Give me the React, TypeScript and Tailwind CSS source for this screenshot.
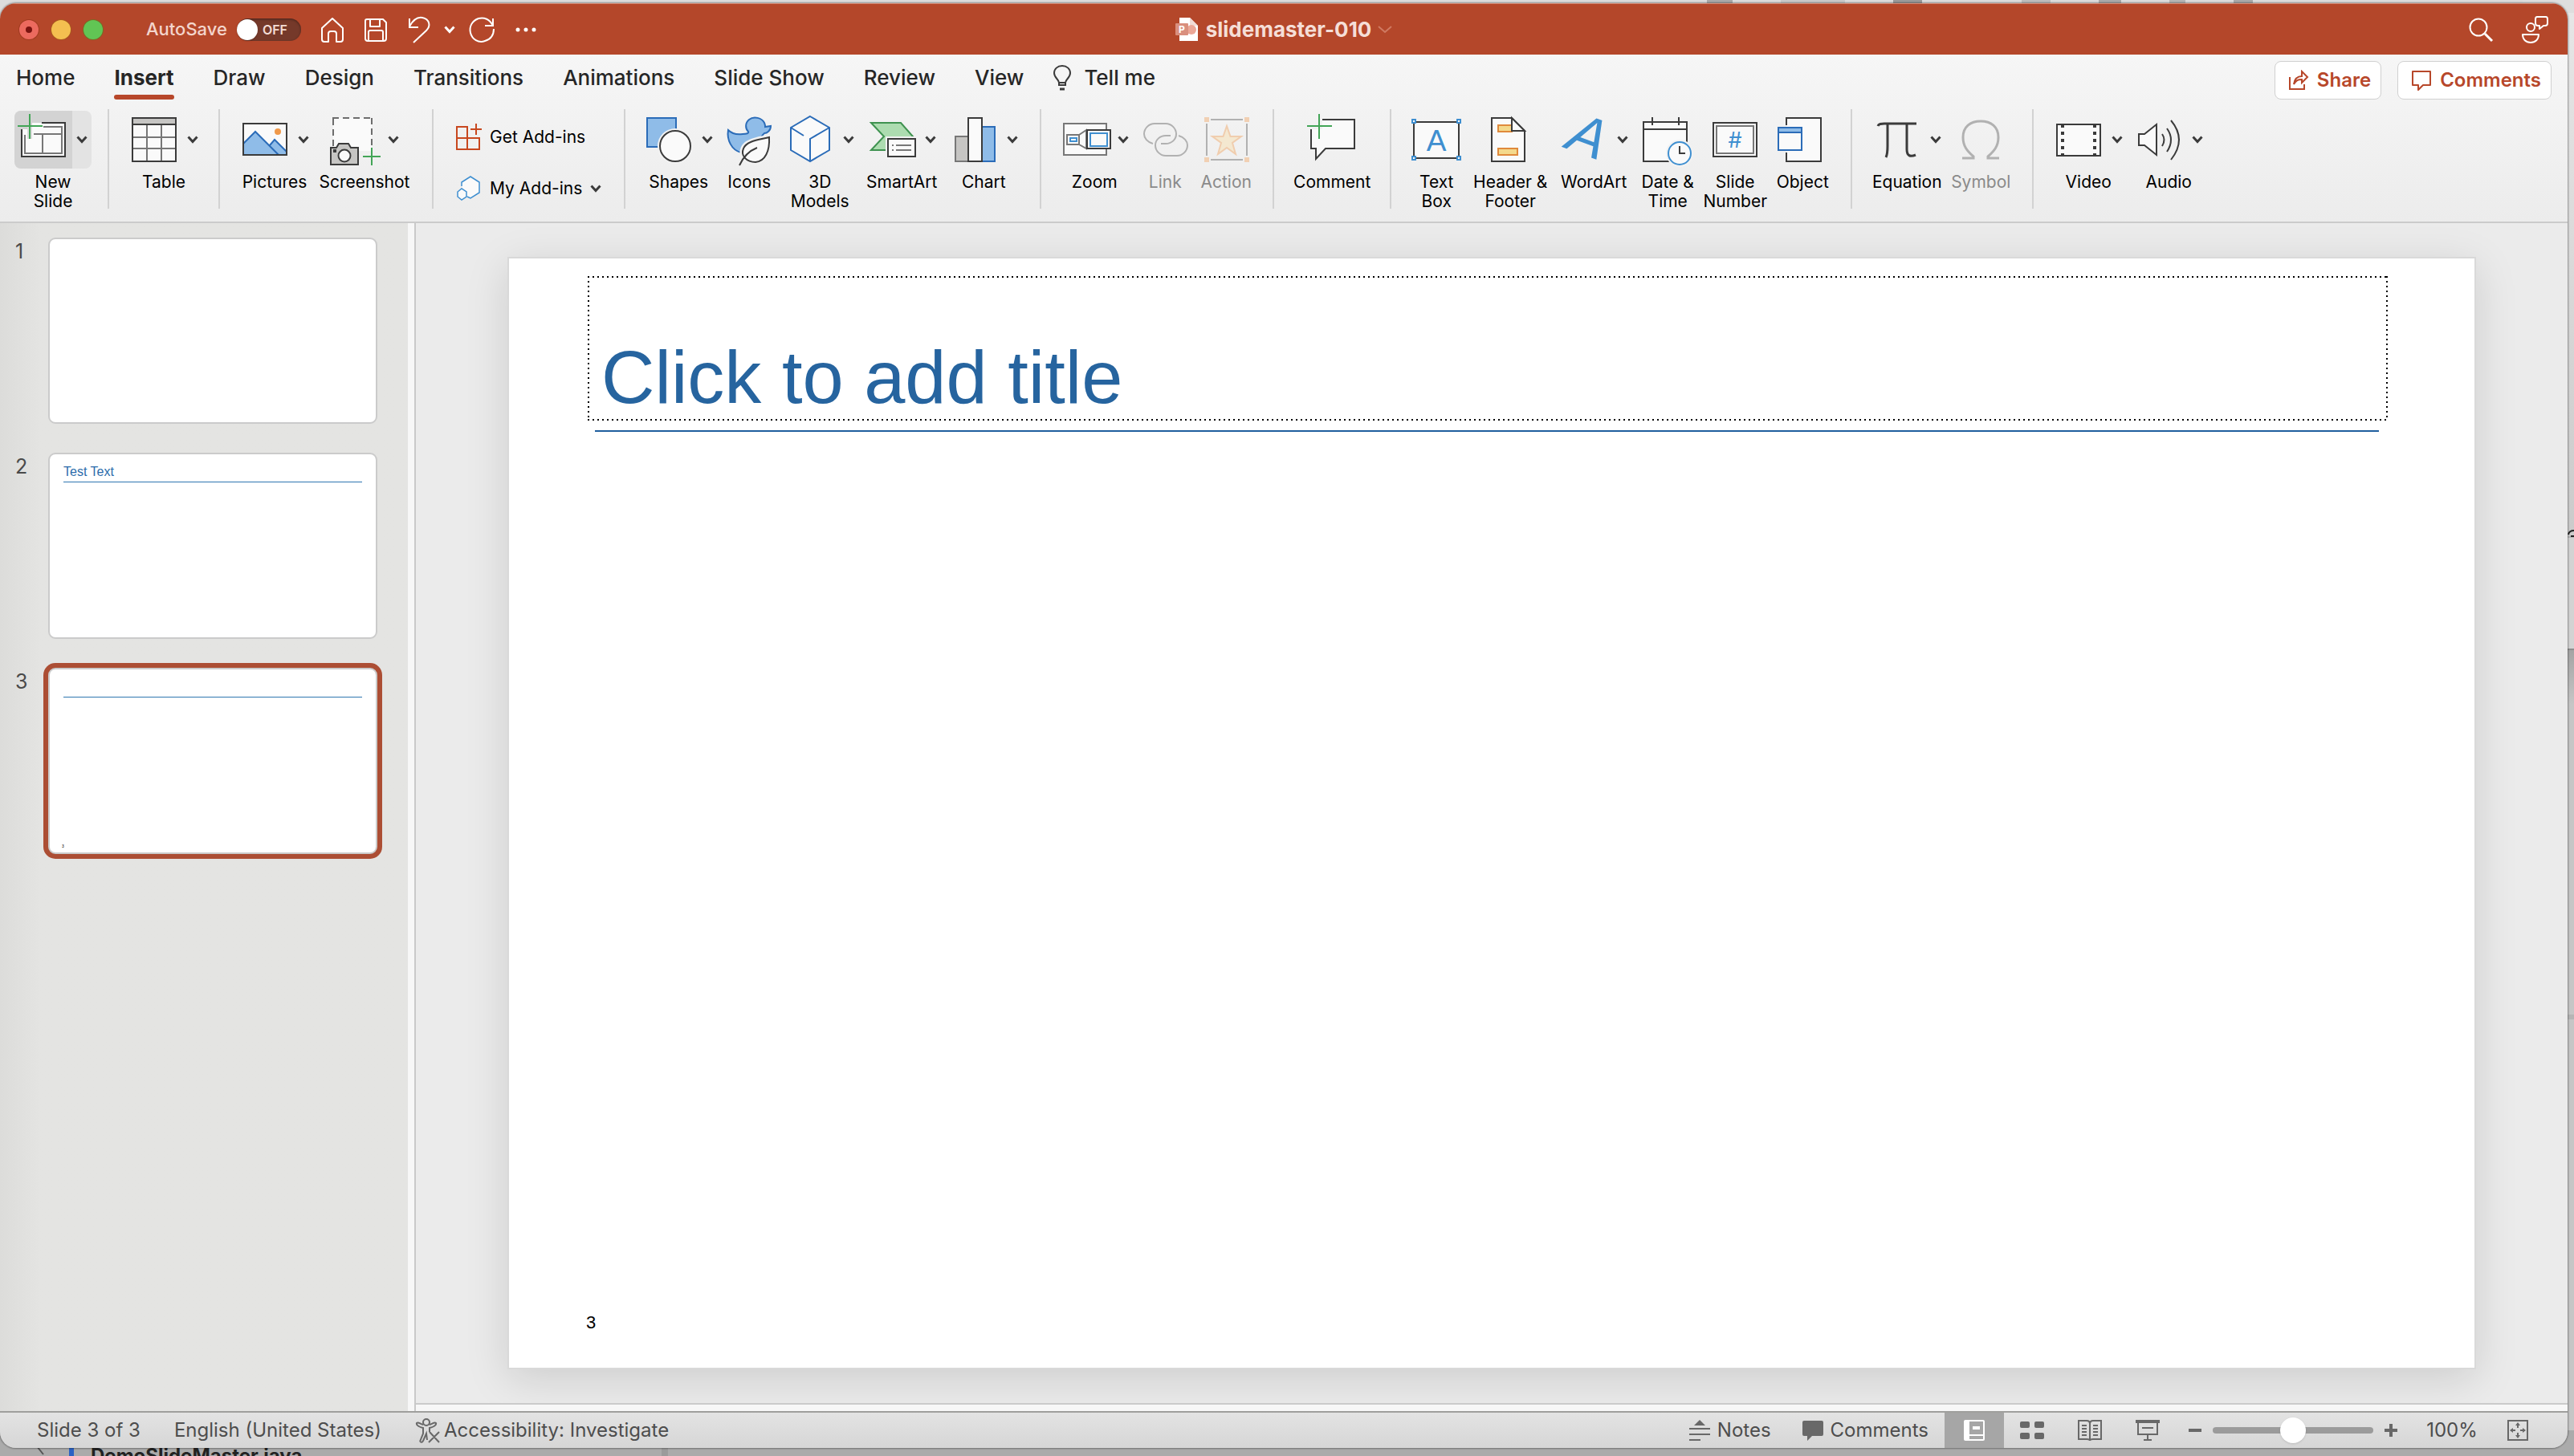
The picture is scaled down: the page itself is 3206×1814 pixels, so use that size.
import React from "react";

const DARK = "#3b3b3b";
const BLUE = "#2b6cb8";
const SKY = "#3f8fd0";
const PALE = "#fafafa";

function Svg({ children, w = 72, h = 72 }: { children: React.ReactNode; w?: number; h?: number }) {
  return (
    <svg width={w} height={h} viewBox={`0 0 ${w} ${h}`} fill="none" strokeWidth={2} className="shrink-0 overflow-visible" aria-hidden="true">
      {children}
    </svg>
  );
}

function Chevron({ color = DARK }: { color?: string }) {
  return (
    <svg width={14} height={10} viewBox="0 0 14 10" fill="none" stroke={color} strokeWidth={3} className="shrink-0" aria-hidden="true">
      <path d="M1.5 1.5 7 7.5 12.5 1.5" />
    </svg>
  );
}

/* ---------- ribbon icons ---------- */

const NewSlideIcon = () => (
  <Svg>
    <path d="M34 15H63V57H9V23H22V15Z" fill={PALE} />
    <path d="M36 20H59V53H13V30" stroke="#777" />
    <path d="M24 29H59M35 29V53" stroke="#777" />
    <path d="M34 15H63V57H9V23" stroke={DARK} />
    <path d="M19 19V35" stroke="#dcdcdc" strokeWidth={6} />
    <path d="M4 19H35M19 4V35" stroke="#43a557" />
  </Svg>
);
const TableIcon = () => (
  <Svg>
    <path d="M9 9H63V63H9Z" fill={PALE} />
    <path d="M9 9H63V17H9Z" fill="#c6c5c3" />
    <path d="M27 17V63M45 17V63M9 33H63M9 47H63" stroke="#777" />
    <path d="M9 9H63V63H9ZM9 17H63" stroke={DARK} />
  </Svg>
);
const PicturesIcon = () => (
  <Svg>
    <path d="M9 16H63V55H9Z" fill={PALE} />
    <path d="M9 41 24 26 53 55H9Z" fill="#8fbce8" />
    <path d="M42 44 48 35 63 51V55H53Z" fill="#8fbce8" />
    <path d="M9 41 24 26 53 55M42 43 48 36 63 51" stroke={BLUE} />
    <circle cx="52" cy="26" r="4" fill="#f0994a" />
    <path d="M9 16H63V55H9Z" stroke={DARK} />
  </Svg>
);
const ScreenshotIcon = () => (
  <Svg>
    <path d="M9 9H57V50H9Z" fill={PALE} />
    <path d="M9 44V9M8 9H58M57 9V44" stroke="#6d6d6d" strokeDasharray="8 5" />
    <path d="M6 46H13L16 41H28L31 46H40V67H6Z" fill="#c6c5c3" stroke={DARK} />
    <circle cx="23" cy="56" r="7.5" fill={PALE} stroke={DARK} />
    <path d="M9 48H13V52H9Z" fill={DARK} />
    <path d="M46 57H68M57 46V68" stroke="#43a557" />
  </Svg>
);
const ShapesIcon = () => (
  <Svg>
    <path d="M9 9H45V45H9Z" fill="#8fbce8" stroke={BLUE} />
    <circle cx="44" cy="44" r="22" fill="#f2f2f2" />
    <circle cx="44" cy="44" r="19" fill={PALE} stroke={DARK} />
  </Svg>
);
const IconsIcon = () => (
  <Svg>
    <path
      d="M10 24C15 29 21 30 28 29C33 29 36 28 35 26C31 22 31 15 36 11C42 6 52 9 55 15C56 17 56 18 56 20L63 19C63 25 58 28 55 28C51 31 51 34 49 38L26 52C14 49 8 36 10 24Z"
      fill="#8fbce8"
      stroke={BLUE}
    />
    <path d="M61 33C50 36 33 37 29 47C25 56 33 64 44 64C56 63 62 50 61 33Z" stroke="#f2f2f2" strokeWidth={7} />
    <path d="M61 33C50 36 33 37 29 47C25 56 33 64 44 64C56 63 62 50 61 33Z" fill={PALE} stroke={DARK} />
    <path d="M24 68C28 59 36 50 46 46" stroke={DARK} />
  </Svg>
);
const CubeIcon = () => (
  <Svg>
    <path d="M36 7 60 21V49L36 63 12 49V21Z" fill={PALE} stroke={BLUE} />
    <path d="M60 21 36 35V63M12 21 28 31" stroke={BLUE} />
  </Svg>
);
const SmartArtIcon = () => (
  <Svg>
    <path d="M10 15H47L62 32 47 49H10L26 32Z" fill="#addcb0" stroke="#3f9250" />
    <path d="M28 32H70V60H28Z" fill="#f2f2f2" />
    <path d="M31 35H65V57H31Z" fill={PALE} stroke={DARK} />
    <path d="M36 43H38M36 49H38M41 43H60M41 49H60" stroke="#777" />
  </Svg>
);
const ChartIcon = () => (
  <Svg>
    <path d="M13 32H29V63H13Z" fill="#c6c5c3" stroke="#777" />
    <path d="M46 20H62V63H46Z" fill="#8fbce8" stroke={BLUE} />
    <path d="M29 9H46V63H29Z" fill={PALE} stroke={DARK} />
  </Svg>
);
const ZoomIcon = () => (
  <Svg>
    <path d="M10 16H63V55H10Z" fill={PALE} stroke="#777" />
    <path d="M14 30H29V42H14Z M29 30 38 24V47L29 42" fill={PALE} stroke="#777" />
    <path d="M18 34H26V38H18Z" stroke={SKY} />
    <path d="M39 24H68V47H39Z" fill={PALE} stroke={DARK} />
    <path d="M43 28H64V44H43Z" stroke={SKY} />
  </Svg>
);
const LinkIcon = () => (
  <Svg>
    <path
      d="M21 41C14 39 10 34 10 29C10 22 16 16 23 16L37 16C44 16 50 22 50 29C50 36 44 41 37 41L31 41M53 31C60 33 64 38 64 43C64 50 58 56 51 56L37 56C30 56 24 50 24 43C24 36 30 31 37 31L43 31"
      stroke="#b1b1b1"
    />
  </Svg>
);
const ActionIcon = () => (
  <Svg>
    <path d="M17 11H57M17 61H57M12 16V56M62 16V56" stroke="#b1b1b1" />
    <path d="M9 8H15V14H9ZM59 8H65V14H59ZM9 58H15V64H9ZM59 58H65V64H59Z" fill="#f1d0b3" />
    <path d="M37 19 41.500 32H55L44 40 48 54 37 46 26 54 30 40 19 32H32.500Z" fill="#f4e8d0" stroke="#f0cdae" />
  </Svg>
);
const CommentIcon = () => (
  <Svg>
    <path d="M24 11H64V47H28L16 60V47H10V23H24Z" fill={PALE} />
    <path d="M24 11H64V47H28L16 60V47H10V23" stroke={DARK} />
    <path d="M5 19H36M20 4V35" stroke="#43a557" />
  </Svg>
);
const TextBoxIcon = () => (
  <Svg>
    <path d="M8 14H64V59H8Z" fill={PALE} stroke={DARK} />
    <path d="M6 11H10V15H6ZM62 11H66V15H62ZM6 57H10V61H6ZM62 57H66V61H62Z" fill={PALE} stroke={SKY} />
    <text x="36" y="50" textAnchor="middle" fontFamily="Liberation Sans" fontSize="37" fill={SKY}>A</text>
  </Svg>
);
const HeaderIcon = () => (
  <Svg>
    <path d="M13 9H38L54 25V63H13Z" fill={PALE} stroke={DARK} />
    <path d="M21 18H38V26H21ZM21 47H45V55H21Z" fill="#f4d98c" stroke="#e08a3c" />
    <path d="M38 9V25H54Z" fill={PALE} stroke={DARK} />
  </Svg>
);
const WordArtIcon = () => (
  <Svg>
    <text x="11" y="46" fontFamily="Liberation Sans" fontStyle="italic" fontSize="70" fill={SKY} transform="rotate(20 11 46)">A</text>
  </Svg>
);
const DateIcon = () => (
  <Svg>
    <path d="M6 14H60V63H6Z" fill={PALE} stroke={DARK} />
    <path d="M6 23H60M17 8V18M50 8V18" stroke={DARK} />
    <circle cx="51" cy="53" r="17" fill="#f2f2f2" />
    <circle cx="51" cy="53" r="14" fill={PALE} stroke={SKY} />
    <path d="M51 44V53H58" stroke={DARK} />
  </Svg>
);
const NumberIcon = () => (
  <Svg>
    <path d="M9 15H63V57H9Z" fill={PALE} stroke={DARK} />
    <path d="M13 19H59V53H13Z" stroke="#777" />
    <text x="36" y="46" textAnchor="middle" fontFamily="Inter" fontSize="27" fill={SKY}>#</text>
  </Svg>
);
const ObjectIcon = () => (
  <Svg>
    <path d="M16 9H59V63H16Z" fill={PALE} />
    <path d="M16 18V9H59V63H16V52" stroke={DARK} />
    <path d="M6 21H35V49H6Z" fill={PALE} stroke={BLUE} />
    <path d="M6 21H35V27H6Z" fill="#8fbce8" stroke={BLUE} />
  </Svg>
);
const EquationIcon = () => (
  <Svg>
    <path d="M12 19C13 16 16 16 20 16H60" stroke={DARK} strokeWidth={3} />
    <path d="M24 16V44C24 50 24 54 22 58M48 16V48C48 56 52 58 59 55" stroke={DARK} strokeWidth={3} />
  </Svg>
);
const SymbolIcon = () => (
  <Svg>
    <path d="M13 59H27V57C19 50 14 44 14 33C14 20 23 13 36 13C49 13 58 20 58 33C58 44 53 50 45 57V59H59" stroke="#b1b1b1" strokeWidth={3} />
  </Svg>
);
const VideoIcon = () => (
  <Svg>
    <path d="M9 17H63V56H9Z" fill={PALE} stroke={DARK} />
    <path d="M16 17V56M56 17V56" stroke={DARK} strokeWidth={4} strokeDasharray="4 5" />
  </Svg>
);
const AudioIcon = () => (
  <Svg>
    <path d="M11 29H18L33 17V55L18 43H11Z" fill={PALE} stroke={DARK} />
    <path d="M40 29Q45 36 40 44M46 22Q56 36 46 51M51 12Q71 36 51 61" stroke={DARK} />
  </Svg>
);
const GetAddinsIcon = () => (
  <Svg w={34} h={34}>
    <path d="M3 4H16V32H3ZM3 18H31V32H16M27 0V14M20 7H34" stroke="#c8481f" />
  </Svg>
);
const MyAddinsIcon = () => (
  <Svg w={34} h={34}>
    <path d="M9 14V9L20 2 31 9V22L20 29 16 27" fill={PALE} stroke={SKY} strokeWidth={1.5} />
    <path d="M4 21 9 17 15 21V27L9 31 4 27Z" fill={PALE} stroke={SKY} strokeWidth={1.5} />
  </Svg>
);

/* ---------- ribbon ---------- */

type Item = { label: string[]; icon: React.ReactNode; menu?: boolean; width?: string; disabled?: boolean; active?: boolean };

function RibbonButton({ label, icon, menu, width, disabled, active }: Item) {
  return (
    <button
      type="button"
      disabled={disabled}
      className={`flex shrink-0 flex-col items-center ${width ?? (menu ? "w-24" : "w-[72px]")} ${disabled ? "text-[#8a8a8a]" : "text-black"}`}
    >
      <span className={`flex h-[72px] items-center ${active ? "rounded-lg bg-[#e3e3e3]" : ""}`}>
        <span className={active ? "rounded-l-lg bg-[#d3d3d3]" : ""}>{icon}</span>
        {menu && (
          <span className="flex w-6 justify-center">
            <Chevron />
          </span>
        )}
      </span>
      <span className="mt-[5px] flex flex-col whitespace-nowrap text-center text-[21px] leading-6">
        {label.map((line) => (
          <span key={line}>{line}</span>
        ))}
      </span>
    </button>
  );
}

function Group({ className, children }: { className: string; children: React.ReactNode }) {
  return <div className={`flex h-[124px] shrink-0 items-start pt-[2px] ${className}`}>{children}</div>;
}

const SEP = "border-r-2 border-[#d2d2d2]";

function Ribbon() {
  return (
    <div className="flex h-[140px]">
      <Group className={`pl-[18px] pr-5 ${SEP}`}>
        <RibbonButton active menu label={["New", "Slide"]} icon={<NewSlideIcon />} />
      </Group>
      <Group className={`px-5 ${SEP}`}>
        <RibbonButton menu label={["Table"]} icon={<TableIcon />} />
      </Group>
      <Group className={`gap-4 pl-5 pr-9 ${SEP}`}>
        <RibbonButton menu label={["Pictures"]} icon={<PicturesIcon />} />
        <RibbonButton menu label={["Screenshot"]} icon={<ScreenshotIcon />} />
      </Group>
      <Group className={`pl-[26px] pr-7 ${SEP}`}>
        <div className="flex flex-col gap-[30px] pt-4 text-[21px]">
          <button type="button" className="flex h-[34px] items-center gap-2.5">
            <GetAddinsIcon />
            Get Add-ins
          </button>
          <button type="button" className="flex h-[34px] items-center gap-2.5">
            <MyAddinsIcon />
            My Add-ins
            <Chevron />
          </button>
        </div>
      </Group>
      <Group className={`gap-1.5 pl-[18px] pr-[22px] ${SEP}`}>
        <RibbonButton menu label={["Shapes"]} icon={<ShapesIcon />} />
        <RibbonButton width="w-[68px]" label={["Icons"]} icon={<IconsIcon />} />
        <RibbonButton menu label={["3D", "Models"]} icon={<CubeIcon />} />
        <RibbonButton menu label={["SmartArt"]} icon={<SmartArtIcon />} />
        <RibbonButton menu label={["Chart"]} icon={<ChartIcon />} />
      </Group>
      <Group className={`gap-1 pl-[18px] pr-[22px] ${SEP}`}>
        <RibbonButton menu label={["Zoom"]} icon={<ZoomIcon />} />
        <RibbonButton disabled label={["Link"]} icon={<LinkIcon />} />
        <RibbonButton disabled label={["Action"]} icon={<ActionIcon />} />
      </Group>
      <Group className={`px-6 ${SEP}`}>
        <RibbonButton width="w-24" label={["Comment"]} icon={<CommentIcon />} />
      </Group>
      <Group className={`gap-2 pl-5 pr-6 ${SEP}`}>
        <RibbonButton label={["Text", "Box"]} icon={<TextBoxIcon />} />
        <RibbonButton width="w-24" label={["Header &", "Footer"]} icon={<HeaderIcon />} />
        <RibbonButton menu label={["WordArt"]} icon={<WordArtIcon />} />
        <RibbonButton label={["Date &", "Time"]} icon={<DateIcon />} />
        <RibbonButton width="w-20" label={["Slide", "Number"]} icon={<NumberIcon />} />
        <RibbonButton label={["Object"]} icon={<ObjectIcon />} />
      </Group>
      <Group className={`gap-2 pl-5 pr-7 ${SEP}`}>
        <RibbonButton menu label={["Equation"]} icon={<EquationIcon />} />
        <RibbonButton disabled label={["Symbol"]} icon={<SymbolIcon />} />
      </Group>
      <Group className="gap-1 pl-5">
        <RibbonButton menu label={["Video"]} icon={<VideoIcon />} />
        <RibbonButton menu label={["Audio"]} icon={<AudioIcon />} />
      </Group>
    </div>
  );
}

const TABS = ["Home", "Insert", "Draw", "Design", "Transitions", "Animations", "Slide Show", "Review", "View"];

function TabBar() {
  return (
    <div className="flex h-[68px] items-start justify-between pl-5 pr-5 pt-2">
      <nav className="flex gap-[49px] text-[26px] font-medium leading-[42px] text-[#262626]">
        {TABS.map((tab) => (
          <button
            key={tab}
            type="button"
            className={`relative h-[48px] whitespace-nowrap pb-1.5 ${
              tab === "Insert" ? "font-bold after:absolute after:inset-x-0 after:bottom-0 after:h-1.5 after:rounded-full after:bg-[#b7472a]" : ""
            }`}
          >
            {tab}
          </button>
        ))}
        <button type="button" className="-ml-3 flex h-[42px] items-center gap-4 whitespace-nowrap">
          <svg width="22" height="32" viewBox="0 0 22 32" fill="none" stroke={DARK} strokeWidth="2" aria-hidden="true">
            <path d="M7 25V22C7 18 1 16 1 10C1 5 5 1 11 1C17 1 21 5 21 10C21 16 15 18 15 22V25ZM7 22H15" />
            <path d="M8 30H14" strokeWidth="3" />
          </svg>
          Tell me
        </button>
      </nav>
      <div className="flex gap-5 text-[24px] font-semibold text-[#b7472a]">
        <button type="button" className="flex h-12 items-center gap-2.5 rounded-lg border border-[#d0d0d0] bg-white pl-4 pr-3">
          <svg width="26" height="26" viewBox="0 0 26 26" fill="none" stroke="#b7472a" strokeWidth="2" aria-hidden="true">
            <path d="M2 9V24H20V18" />
            <path d="M7 18C8 11 11 8 17 8V2L24 9 17 16V12C12 12 10 13 7 18Z" />
          </svg>
          Share
        </button>
        <button type="button" className="flex h-12 items-center gap-2.5 rounded-lg border border-[#d0d0d0] bg-white pl-4 pr-3">
          <svg width="26" height="26" viewBox="0 0 26 26" fill="none" stroke="#b7472a" strokeWidth="2" aria-hidden="true">
            <path d="M2 2H24V19H15L9 25V19H2Z" strokeLinejoin="round" />
          </svg>
          Comments
        </button>
      </div>
    </div>
  );
}

/* ---------- title bar ---------- */

function TitleBar() {
  return (
    <header className="grid h-16 grid-cols-[1fr_auto_1fr] items-center border-t border-[#d98b74] bg-[#b4472a]">
      <div className="flex items-center pl-6">
        <div className="flex gap-4">
          <button type="button" aria-label="Close" className="flex size-6 items-center justify-center rounded-full bg-[#ec6a5e] ring-1 ring-[#a03a20]">
            <span className="size-2 rounded-full bg-[#7a1410]" />
          </button>
          <button type="button" aria-label="Minimize" className="size-6 rounded-full bg-[#f4bf50] ring-1 ring-[#a8571f]" />
          <button type="button" aria-label="Zoom window" className="size-6 rounded-full bg-[#61c554] ring-1 ring-[#7a6a24]" />
        </div>
        <label htmlFor="autosave" className="ml-[54px] text-[22px] font-medium text-[#f3d5cc]">
          AutoSave
        </label>
        <button
          id="autosave"
          type="button"
          role="switch"
          aria-checked="false"
          className="ml-3 flex h-7 w-20 items-center gap-[6px] rounded-full bg-[#75392a] shadow-[inset_0_1px_3px_rgba(0,0,0,0.4)]"
        >
          <span className="size-[26px] rounded-full bg-white shadow" />
          <span className="text-[16px] font-semibold text-[#f3dcd4]">OFF</span>
        </button>
        <div className="ml-[24px] flex items-center gap-6">
          <button type="button" aria-label="Home">
            <Svg w={30} h={32}>
              <path d="M2 14 15 2 28 14V28Q28 31 25 31H20V21Q20 18 17 18H13Q10 18 10 21V31H5Q2 31 2 28Z" stroke="#fff" strokeLinejoin="round" />
            </Svg>
          </button>
          <button type="button" aria-label="Save">
            <Svg w={30} h={32}>
              <path d="M4 3H24L28 7V27Q28 30 25 30H5Q2 30 2 27V5Q2 3 4 3ZM8 3V12H20V3M6 30V19Q6 17 8 17H22Q24 17 24 19V30" stroke="#fff" strokeLinejoin="round" />
            </Svg>
          </button>
          <div className="flex items-center gap-4">
            <button type="button" aria-label="Undo">
              <Svg w={30} h={34}>
                <path d="M3 3V14H14M3 13C8 4 14 1 19 2C28 4 30 12 24 18L8 33" stroke="#fff" />
              </Svg>
            </button>
            <button type="button" aria-label="Undo history">
              <Chevron color="#fff" />
            </button>
            <button type="button" aria-label="Redo">
              <Svg w={34} h={34}>
                <path d="M31 3V12H21M31 12C27 4 20 1 13 3C5 6 1 13 3 21C5 29 13 34 21 31C28 29 32 24 32 16" stroke="#fff" />
              </Svg>
            </button>
          </div>
          <button type="button" aria-label="More">
            <Svg w={28} h={8}>
              <path d="M4 1.500A2.500 2.500 0 1 1 4 6.500A2.500 2.500 0 1 1 4 1.500M14 1.500A2.500 2.500 0 1 1 14 6.500A2.500 2.500 0 1 1 14 1.500M24 1.500A2.500 2.500 0 1 1 24 6.500A2.500 2.500 0 1 1 24 1.500" fill="#fff" />
            </Svg>
          </button>
        </div>
      </div>
      <button type="button" className="flex items-center gap-2 text-[26px] font-bold text-[#f5ded7]">
        <svg width="30" height="30" viewBox="0 0 30 30" aria-hidden="true">
          <path d="M5 0H18L28 10V29H5Z" fill="#fff" />
          <path d="M18 0V10H28Z" fill="#f1dcd6" />
          <circle cx="20" cy="15" r="6" fill="#eba797" />
          <rect x="0" y="7" width="16" height="15" rx="1" fill="#d98f7e" />
          <text x="8" y="19" textAnchor="middle" fontFamily="Inter" fontSize="12" fontWeight="700" fill="#fff">P</text>
        </svg>
        slidemaster-010
        <svg width="18" height="12" viewBox="0 0 18 12" fill="none" stroke="#cf7a62" strokeWidth="2" aria-hidden="true">
          <path d="M1 2 9 9 17 2" />
        </svg>
      </button>
      <div className="flex items-center justify-end gap-[34px] pr-6">
        <button type="button" aria-label="Search">
          <Svg w={32} h={32}>
            <circle cx="13" cy="13" r="10.500" stroke="#fff" />
            <path d="M21 21 30 30" stroke="#fff" strokeWidth={3} />
          </Svg>
        </button>
        <button type="button" aria-label="Presence">
          <Svg w={34} h={34}>
            <circle cx="12" cy="14" r="5" stroke="#fff" />
            <path d="M2 23H22C22 29 18 33 12 33C6 33 2 29 2 23ZM20 1H31Q33 1 33 4V9Q33 12 30 12H28L23 16V12H21Q18 12 18 9V4Q18 1 20 1Z" stroke="#fff" strokeLinejoin="round" />
          </Svg>
        </button>
      </div>
    </header>
  );
}

/* ---------- slides ---------- */

function Thumbnail({ n, title, rule, selected }: { n: number; title?: string; rule?: boolean; selected?: boolean }) {
  return (
    <button type="button" className="flex w-full items-start text-left">
      <span className="w-[60px] pl-[19px] pt-[3px] text-[25px] leading-7 text-[#4a4a4a]">{n}</span>
      <span
        className={`mr-[38px] flex h-[232px] flex-1 flex-col rounded-[9px] border-2 border-[#cbcbcb] bg-white px-[17px] font-['Liberation_Sans',sans-serif] ${
          selected ? "ring-6 ring-[#ac4e34]" : ""
        }`}
      >
        <span className="h-[34px] pt-3 text-[16px] leading-5 text-[#2b6cab]">{title}</span>
        {rule && <span className="h-px bg-[#2f76b0]" />}
        {selected && <span className="-ml-0.5 mb-[5px] mt-auto text-[5px] leading-none text-black">{n}</span>}
      </span>
    </button>
  );
}

function SlideEditor() {
  return (
    <main className="flex flex-1 flex-col border-l-2 border-[#c9c9c9] bg-[#ebebeb]">
      <div className="flex-1 px-[114px] pt-[42px]">
        <section className="flex aspect-[2452/1386] flex-col border-2 border-[#d9d9d9] bg-white pb-[46px] pl-[98px] pr-[108px] pt-[22px] shadow-[0_12px_50px_rgba(0,0,0,0.13)]">
          <h1 className="flex h-[180px] items-end bg-[repeating-linear-gradient(90deg,#000_0_2px,transparent_2px_6px),repeating-linear-gradient(90deg,#000_0_2px,transparent_2px_6px),repeating-linear-gradient(180deg,#000_0_2px,transparent_2px_6px),repeating-linear-gradient(180deg,#000_0_2px,transparent_2px_6px)] bg-no-repeat px-[17px] pb-[2px] font-['Liberation_Sans',sans-serif] text-[92px] leading-[104px] text-[#26649f] [background-position:top,bottom,left,right] [background-size:100%_2px,100%_2px,2px_100%,2px_100%]">
            Click to add title
          </h1>
          <div className="ml-[9px] mr-[11px] mt-3 h-[2px] bg-[#1f5f9e]" />
          <p className="-ml-0.5 mt-auto font-['Liberation_Sans',sans-serif] text-[22px] leading-5 text-black">3</p>
        </section>
      </div>
      <div className="h-[10px] border-t-2 border-[#cbcbcb] bg-[#f7f7f7]" />
    </main>
  );
}

/* ---------- status bar ---------- */

const GRAY = "#686868";

function StatusBar() {
  return (
    <footer className="flex h-[46px] items-stretch justify-between border-t-2 border-[#9f9f9d] bg-linear-to-b from-[#e3e3e3] to-[#d6d6d6] text-[24px] text-[#4d4d4d]">
      <div className="flex items-center gap-[42px] pl-[46px]">
        <span>Slide 3 of 3</span>
        <button type="button">English (United States)</button>
        <button type="button" className="flex items-center gap-1">
          <Svg w={32} h={32}>
            <circle cx="14" cy="6" r="4" stroke={GRAY} />
            <path d="M10 9C6 8 4 5 2 7C1 10 6 12 10 13V20L6 30M18 9C22 8 24 5 26 7C27 10 22 12 18 13V18M6 30Q9 32 10 29L14 20 15 28M18 18 30 31M30 18 17 31" stroke={GRAY} />
          </Svg>
          Accessibility: Investigate
        </button>
      </div>
      <div className="flex items-center pr-12">
        <button type="button" className="flex items-center gap-2">
          <Svg w={28} h={28}>
            <path d="M14 1 21 8H7Z" fill={GRAY} />
            <path d="M1 12H27M1 19H27M1 26H15" stroke={GRAY} />
          </Svg>
          Notes
        </button>
        <button type="button" className="ml-[38px] flex items-center gap-2">
          <Svg w={28} h={28}>
            <path d="M3 2H25Q27 2 27 4V19Q27 21 25 21H13L7 27V21H3Q1 21 1 19V4Q1 2 3 2Z" fill={GRAY} />
          </Svg>
          Comments
        </button>
        <button type="button" aria-label="Normal view" className="ml-5 flex w-[74px] items-center justify-center self-stretch bg-[#a6a6a6]">
          <Svg w={28} h={28}>
            <path d="M3 1H25Q27 1 27 3V25Q27 27 25 27H3Q1 27 1 25V3Q1 1 3 1Z" fill="#fff" />
            <path d="M8 3H25V19H8ZM8 21H25V25H8Z" fill="#a6a6a6" />
            <path d="M12 9H21V13H12Z" fill="#fff" />
          </Svg>
        </button>
        <div className="flex items-center gap-[42px] pl-5">
          <button type="button" aria-label="Slide sorter">
            <Svg w={30} h={28}>
              <rect x="0" y="3" width="12" height="8" rx="2" fill={GRAY} />
              <rect x="18" y="3" width="12" height="8" rx="2" fill={GRAY} />
              <rect x="0" y="17" width="12" height="8" rx="2" fill={GRAY} />
              <rect x="18" y="17" width="12" height="8" rx="2" fill={GRAY} />
            </Svg>
          </button>
          <button type="button" aria-label="Reading view">
            <Svg w={30} h={28}>
              <path d="M1 2H11Q15 2 15 6Q15 2 19 2H29V25H19Q15 25 15 27Q15 25 11 25H1ZM15 6V26M5 8H11M5 12H11M5 16H11M5 20H11M19 8H25M19 12H25M19 16H25M19 20H25" stroke={GRAY} />
            </Svg>
          </button>
          <button type="button" aria-label="Slide show">
            <Svg w={30} h={28}>
              <path d="M0 1H30V5H0Z" fill={GRAY} />
              <path d="M3 5V19H27V5M8 11H22M15 19V26M10 26H20" stroke={GRAY} />
            </Svg>
          </button>
        </div>
        <button type="button" aria-label="Zoom out" className="ml-9 mr-3.5">
          <Svg w={16} h={18}>
            <path d="M0 9H16" stroke={GRAY} strokeWidth={4} />
          </Svg>
        </button>
        <input
          type="range"
          aria-label="Zoom level"
          min={0}
          max={100}
          defaultValue={50}
          className="h-2 w-[200px] appearance-none rounded-full bg-[#9b9b9b] [&::-webkit-slider-thumb]:size-8 [&::-webkit-slider-thumb]:appearance-none [&::-webkit-slider-thumb]:rounded-full [&::-webkit-slider-thumb]:bg-white [&::-webkit-slider-thumb]:shadow"
        />
        <button type="button" aria-label="Zoom in" className="ml-3.5">
          <Svg w={16} h={18}>
            <path d="M0 9H16M8 1V17" stroke={GRAY} strokeWidth={4} />
          </Svg>
        </button>
        <span className="w-[136px] text-center">100%</span>
        <button type="button" aria-label="Fit slide to window">
          <Svg w={28} h={28}>
            <path d="M2 2H26V26H2ZM14 5V11M14 17V23M5 14H11M17 14H23" stroke={GRAY} />
            <path d="M14 4 17 8H11ZM14 24 17 20H11ZM4 14 8 11V17ZM24 14 20 11V17Z" fill={GRAY} />
          </Svg>
        </button>
      </div>
    </footer>
  );
}

/* ---------- windows behind the main one ---------- */

function Backdrop() {
  return (
    <div className="absolute inset-0 overflow-hidden bg-[#dcdcdc]" aria-hidden="true">
      <div className="absolute inset-x-0 top-0 flex h-1 justify-end gap-[60px] pr-[400px]">
        <span className="w-8 bg-[#a9a9a9]" />
        <span className="w-20 bg-[#c9c9c9]" />
        <span className="w-9 bg-[#9a9a9a]" />
        <span className="ml-16 w-9 bg-[#bdbdbd]" />
        <span className="w-7 bg-[#a9a9a9]" />
        <span className="w-5 bg-[#b5b5b5]" />
        <span className="w-6 bg-[#a9a9a9]" />
      </div>
      <div className="absolute inset-y-0 right-0 w-16 border-t-[16px] border-[#dedede] bg-[#c6c6c6]">
        <div className="h-[654px] border-b-2 border-[#b5b5b5] bg-linear-to-b from-[#e6e6e6] to-[#cbcbcb]">
          <svg width="64" height="12" viewBox="0 0 64 12" fill="none" stroke="#222" strokeWidth="2" className="mt-[642px] inline-block">
            <path d="M57 8Q58 3 64 3M60 10H64" />
          </svg>
        </div>
        <div className="h-[140px] border-b-2 border-[#8f8f8f] bg-[#d3d3d3]" />
        <div className="h-[460px] border-b-6 border-[#b5b5b5] bg-linear-to-b from-[#a4a4a4] to-[#c6c6c6] to-15%" />
      </div>
      <div className="absolute inset-x-0 bottom-0 h-8 bg-[#ababab]">
        <div className="flex h-full items-end">
          <svg width="14" height="14" viewBox="0 0 14 14" className="ml-[44px]" fill="none" stroke="#555" strokeWidth="2">
            <path d="M2 2 10 12" />
          </svg>
          <span className="ml-7 h-full w-1.5 bg-[#2b62c4]" />
          <span className="ml-[21px] h-4 text-[24px] font-bold leading-8 text-[#222]">DemoSlideMaster.java</span>
          <span className="ml-[448px] h-full w-2 bg-[#9b9b9b]" />
        </div>
      </div>
    </div>
  );
}

export default function App() {
  return (
    <div className="relative flex h-screen min-h-[1000px] flex-col overflow-hidden font-[Inter,'Liberation_Sans',sans-serif]">
      <Backdrop />
      <div className="relative mb-[10px] mr-2 mt-1 flex flex-1 flex-col overflow-hidden rounded-b-[20px] rounded-t-[20px] shadow-[0_0_2px_1px_rgba(0,0,0,0.35)]">
        <TitleBar />
        <div className="border-b-2 border-[#cbcbcb] bg-linear-to-b from-[#f6f6f6] to-[#ececec]">
          <TabBar />
          <Ribbon />
        </div>
        <div className="flex flex-1">
          <aside className="flex w-[516px] flex-col gap-9 border-r-8 border-[#f7f7f7] bg-linear-to-r from-[#dcdcda] to-[#e4e4e2] to-10% pt-[18px]">
            <Thumbnail n={1} />
            <Thumbnail n={2} title="Test Text" rule />
            <Thumbnail n={3} rule selected />
          </aside>
          <SlideEditor />
        </div>
        <StatusBar />
      </div>
    </div>
  );
}
